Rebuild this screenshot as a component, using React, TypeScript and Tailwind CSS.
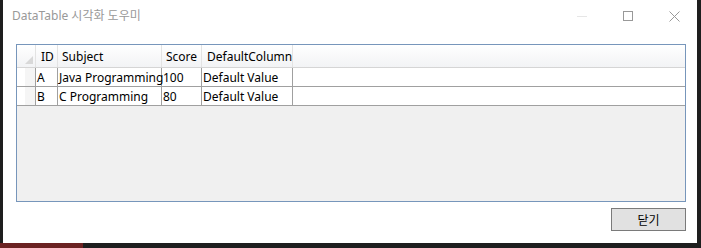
import React from "react";

const font = { fontFamily: '"Noto Sans", "Noto Sans CJK KR", sans-serif' };

const rows = [
  ["A", "Java Programming", "100", "Default Value"],
  ["B", "C Programming", "80", "Default Value"],
];

export default function App() {
  return (
    <div className="w-[701px] h-[248px] bg-[#1e1e1e] flex flex-col overflow-hidden" style={font}>
      <div className="flex h-[243px]">
        <div className="w-[3px] bg-[#1e1e1e]" />
        <div className="w-[694px] h-[243px] bg-white flex flex-col">
          {/* title bar */}
          <div className="h-[32px] flex items-center">
            <div className="pl-[9px] text-[12px] text-[#999999] flex-1 pb-[1px]">DataTable 시각화 도우미</div>
            <div className="w-[46px] h-[32px] flex items-center justify-center">
              <div className="w-[10px] h-[1px] bg-[#e6e6e6]" />
            </div>
            <div className="w-[46px] h-[32px] flex items-center justify-center">
              <div className="w-[10px] h-[10px] border border-[#999999]" />
            </div>
            <div className="w-[46px] h-[32px] flex items-center justify-center">
              <svg width="11" height="11" viewBox="0 0 11 11">
                <path d="M0.5 0.5 L10.5 10.5 M10.5 0.5 L0.5 10.5" stroke="#999999" strokeWidth="1" />
              </svg>
            </div>
          </div>
          {/* grid */}
          <div className="ml-[13px] mt-[12px] w-[670px] h-[158px] border border-[#7796bb] bg-[#f0f0f0] flex flex-col text-[12px] text-black">
            <div className="flex h-[23px] bg-gradient-to-b from-white to-[#f2f3f5] border-b border-[#d5d5d5]">
              <div className="w-[19px] border-r border-[#e3e3e3] flex items-end justify-end pr-[2px] pb-[3px]">
                <svg width="8" height="8" viewBox="0 0 8 8"><path d="M8 0 L8 8 L0 8 Z" fill="#d8d8d8" /></svg>
              </div>
              <div className="w-[22px] border-r border-[#e3e3e3] flex items-center pl-[5px] pt-[2px]">ID</div>
              <div className="w-[104px] border-r border-[#e3e3e3] flex items-center pl-[4px] pt-[2px]">Subject</div>
              <div className="w-[40px] border-r border-[#e3e3e3] flex items-center pl-[4px] pt-[2px]">Score</div>
              <div className="w-[91px] border-r border-[#e3e3e3] flex items-center pl-[5px] pt-[2px]">DefaultColumn</div>
              <div className="flex-1" />
            </div>
            {rows.map((r, i) => (
              <div key={i} className="flex h-[19px] bg-white border-b border-[#a0a0a0]">
                <div className="w-[19px] flex">
                  <div className="w-[8px] bg-white" />
                  <div className="flex-1 bg-[#f5f5f5] border-r border-[#a0a0a0]" />
                </div>
                <div className="w-[22px] border-r border-[#a0a0a0] flex items-center pl-[1px] pt-[2px]">{r[0]}</div>
                <div className="w-[104px] border-r border-[#a0a0a0] flex items-center pl-[1px] pt-[2px] whitespace-nowrap">{r[1]}</div>
                <div className="w-[40px] border-r border-[#a0a0a0] flex items-center pl-[1px] pt-[2px]">{r[2]}</div>
                <div className="w-[91px] border-r border-[#a0a0a0] flex items-center pl-[1px] pt-[2px] whitespace-nowrap">{r[3]}</div>
                <div className="flex-1" />
              </div>
            ))}
          </div>
          {/* button */}
          <div className="flex justify-end pr-[11px] mt-[6px]">
            <div className="w-[75px] h-[23px] bg-[#e1e1e1] border border-[#7a7a7a] flex items-center justify-center text-[12px] text-black pt-[2px]">
              닫기
            </div>
          </div>
        </div>
        <div className="flex-1 bg-[#1e1e1e]" />
      </div>
      <div className="flex h-[5px]">
        <div className="w-[83px] bg-[#6b2222]" />
        <div className="flex-1 bg-[#1e1e1e]" />
      </div>
    </div>
  );
}
